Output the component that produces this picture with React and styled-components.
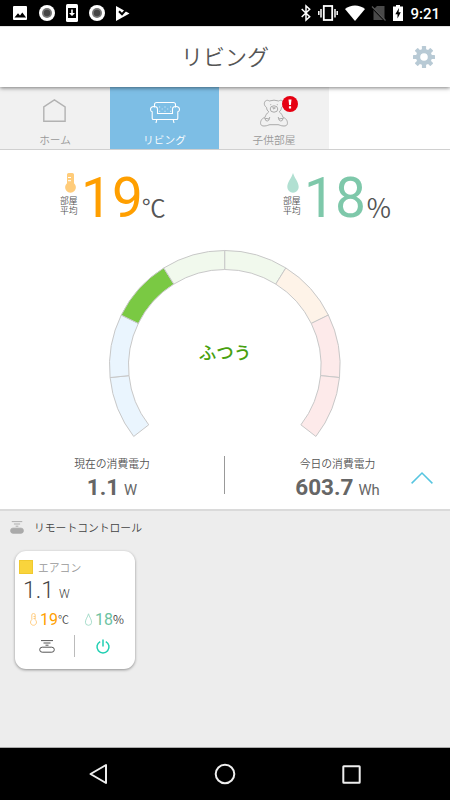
import React from "react"
import styled, { createGlobalStyle } from "styled-components"

const GlobalStyle = createGlobalStyle`
  * {
    box-sizing: border-box;
  }
  body {
    margin: 0;
    background: #fff;
    color: #555;
    font-family: Roboto, "Noto Sans CJK JP", sans-serif;
    font-weight: 350;
  }
  svg {
    display: block;
    flex: none;
    overflow: visible;
  }
`

const Screen = styled.div`
  width: 450px;
  height: 800px;
  display: flex;
  flex-direction: column;
  overflow: hidden;
`

const StatusBar = styled.div`
  height: 26px;
  flex: none;
  background: #000;
  display: flex;
  align-items: center;
  justify-content: space-between;
  padding: 0 10px 0 12px;
`

const StatusGroup = styled.div`
  display: flex;
  align-items: center;
  gap: ${props => props.$gap}px;
`

const Clock = styled.span`
  color: #fff;
  font-size: 15px;
  font-weight: 500;
  line-height: 26px;
  padding-top: 2px;
`

const Header = styled.header`
  position: relative;
  z-index: 1;
  height: 61px;
  flex: none;
  background: #fff;
  border-top: 1px solid #e2e2e2;
  box-shadow: 0 1px 4px rgba(0, 0, 0, 0.5);
  display: grid;
  grid-template-columns: 1fr auto 1fr;
  align-items: center;

  svg {
    justify-self: end;
    margin-right: 15px;
  }
`

const Heading = styled.h1`
  grid-column: 2;
  margin: 2px 0 0;
  color: #555;
  font-size: 22px;
  line-height: 32px;
  font-weight: 350;
`

const Tabs = styled.nav`
  height: 63px;
  flex: none;
  display: grid;
  grid-template-columns: 110px 109px 110px;
  border-bottom: 1px solid #d0d0d0;
`

const Tab = styled.div`
  display: flex;
  flex-direction: column;
  align-items: center;
  background: ${props => (props.$active ? "#7dbee5" : "#f1f1f1")};
  color: ${props => (props.$active ? "#fff" : "#999")};
  padding-top: 10px;
`

const TabIcon = styled.div`
  position: relative;
  height: 36px;
`

const TabLabel = styled.span`
  font-size: 10.7px;
  line-height: 16px;
`

const Alert = styled.div`
  position: absolute;
  top: -1px;
  left: 22px;
`

const Summary = styled.section`
  height: 361px;
  flex: none;
  border-bottom: 2px solid #dadada;
`

const Metrics = styled.div`
  height: 100px;
  display: grid;
  grid-template-columns: 223px 1fr;
  padding-left: 60px;
`

const Metric = styled.div`
  display: flex;
`

const MetricCaption = styled.div`
  width: 21px;
  padding-top: 23px;

  svg {
    margin: 0 0 3px ${props => props.$inset}px;
  }
`

const CaptionLine = styled.div`
  font-size: 8.8px;
  line-height: 10px;
`

const MetricValue = styled.span`
  color: ${props => props.$color};
  font-size: 55px;
  font-weight: 400;
  line-height: 64px;
  padding-top: 16px;
`

const MetricUnit = styled.span`
  font-family: "Noto Sans CJK JP", sans-serif;
  font-size: ${props => props.$size}px;
  line-height: 36px;
  padding-top: 39px;
  margin-left: ${props => props.$offset || 0}px;
`

const Gauge = styled.div`
  display: grid;
  width: 232px;
  margin: 0 auto 0 109px;
  height: 206px;

  > * {
    grid-area: 1 / 1;
  }
`

const GaugeLabel = styled.div`
  color: #48a00f;
  font-size: 17.5px;
  font-weight: 500;
  line-height: 28px;
  text-align: center;
  padding-top: 89px;
`

const Power = styled.div`
  display: grid;
  grid-template-columns: 224px 1px 225px;
`

const PowerItem = styled.div`
  text-align: center;
`

const PowerLabel = styled.div`
  font-size: 10.8px;
  line-height: 16px;
  padding-top: 1px;
`

const PowerValue = styled.div`
  display: flex;
  justify-content: center;
  align-items: baseline;
  gap: 5px;
  font-size: 22.5px;
  font-weight: 700;
  color: #666;
  line-height: 28px;
`

const PowerUnit = styled.span`
  font-size: 14.8px;
  font-weight: 400;
`

const Divider = styled.div`
  width: 1px;
  height: ${props => props.$height}px;
  background: ${props => props.$color};
`

const PowerToday = styled(PowerItem)`
  display: grid;

  > * {
    grid-area: 1 / 1;
  }

  svg {
    margin: 16px 17px 0 auto;
    justify-self: end;
  }
`

const Remote = styled.section`
  flex: 1;
  background: #ededed;
  border-bottom: 1px solid #aaa;
`

const RemoteTitle = styled.div`
  display: flex;
  align-items: center;
  gap: 10px;
  height: 32px;
  padding-left: 10px;
  color: #444;
  font-size: 10.8px;
`

const Card = styled.article`
  width: 120px;
  height: 118px;
  margin: 8px 0 0 15px;
  background: #fff;
  border-radius: 11px;
  box-shadow: 0 1px 3px rgba(0, 0, 0, 0.4);
  padding-top: 8px;
`

const CardTitle = styled.div`
  display: flex;
  align-items: center;
  gap: 5px;
  padding-left: 4px;
  height: 16px;
  color: #999;
  font-size: 10.8px;
`

const Swatch = styled.span`
  width: 14px;
  height: 14px;
  background: #f9d43c;
  border: 1px solid #f0c92e;
`

const CardPower = styled.div`
  display: flex;
  align-items: baseline;
  gap: 5px;
  padding-left: 8px;
  font-size: 23px;
  font-weight: 350;
  line-height: 31px;
  color: #444;

  small {
    font-size: 12px;
  }
`

const CardReadings = styled.div`
  display: grid;
  grid-template-columns: 55px 1fr;
  padding: 0 0 0 15px;
  margin-top: -1px;
`

const Reading = styled.div`
  display: flex;
  align-items: center;
  height: 20px;
  color: ${props => props.$color};
  font-size: 16px;
  font-weight: 400;

  svg {
    margin-right: 3px;
  }
`

const ReadingUnit = styled.span`
  font-family: "Noto Sans CJK JP", sans-serif;
  color: #444;
  font-size: ${props => props.$size}px;
  line-height: 16px;
  font-weight: 350;
  margin-bottom: 1px;
`

const CardActions = styled.div`
  display: grid;
  grid-template-columns: 59px 1px 1fr;
  align-items: center;
  height: 24px;
  margin-top: 5px;

  svg {
    margin: 0 auto;
  }
  svg:first-child {
    margin-right: 19px;
  }
  svg:last-child {
    margin-left: 21px;
  }
`

const NavBar = styled.div`
  height: 52px;
  flex: none;
  background: #000;
  display: flex;
  align-items: center;
  justify-content: space-between;
  padding: 0 89px;
`

const GAUGE_STEP = 31.95
const gaugeColors = [
  "#eaf5fe",
  "#eaf5fe",
  "#7ac943",
  "#f1f9ed",
  "#f1f9ed",
  "#fef3e8",
  "#fdeaea",
  "#fdeaea",
]

const polar = (radius, degrees) => {
  const a = (degrees * Math.PI) / 180
  return `${115.8 + radius * Math.sin(a)} ${115.8 - radius * Math.cos(a)}`
}

const segmentPath = index => {
  const from = (index - 4) * GAUGE_STEP
  const to = from + GAUGE_STEP
  return `M${polar(115.3, from)} A115.3 115.3 0 0 1 ${polar(115.3, to)}
    L${polar(96.3, to)} A96.3 96.3 0 0 0 ${polar(96.3, from)} Z`
}

const GaugeArc = () => (
  <svg width="232" height="204" fill="none" stroke="#c8c8c8">
    {gaugeColors.map((color, index) => (
      <path key={index} d={segmentPath(index)} fill={color} />
    ))}
  </svg>
)

const RecordIcon = () => (
  <svg width="16" height="16">
    <circle cx="8" cy="8" r="8" fill="#fff" />
    <circle cx="8" cy="8" r="5" fill="#777" />
    <circle cx="8" cy="8" r="3.2" fill="#444" />
  </svg>
)

const PictureIcon = () => (
  <svg width="16" height="14">
    <rect x="1" width="14" height="14" rx="1" fill="#fff" />
    <path d="M2.5 11.5 6 7.3l2 2.3 2.3-3 3.8 4.9z" fill="#000" />
  </svg>
)

const DownloadIcon = () => (
  <svg width="12" height="18">
    <rect width="12" height="18" rx="1.5" fill="#fff" />
    <path d="M2 4h8v10H2z" fill="#000" />
    <path d="M5.2 5.5h1.6V9H9l-3 3-3-3h2.2z" fill="#fff" />
  </svg>
)

const PlayCheckIcon = () => (
  <svg width="14" height="15">
    <path d="M0 0 13.5 7.5 0 15z" fill="#fff" />
    <path d="m3 5.2 3 3L12.4 1" fill="none" stroke="#000" strokeWidth="2" />
    <path d="m9.5 3.2 2.4 1.4" fill="none" stroke="#000" />
  </svg>
)

const BluetoothIcon = () => (
  <svg width="10" height="16" fill="none" stroke="#fff" strokeWidth="1.5">
    <path d="m.7 4 8 7.8L5 15V1l3.7 3.2L.7 12" />
  </svg>
)

const VibrateIcon = () => (
  <svg width="20" height="16">
    <rect
      x="5.8"
      y="1"
      width="8.4"
      height="14"
      fill="#000"
      stroke="#fff"
      strokeWidth="1.8"
    />
    <path
      d="M.8 6v4M3 4v8.5M17 4v8.5M19.2 6v4"
      stroke="#fff"
      strokeWidth="1.5"
    />
  </svg>
)

const WifiIcon = () => (
  <svg width="20" height="16">
    <path d="M0 4C5.5-.8 14.5-.8 20 4L10 16z" fill="#fff" />
  </svg>
)

const NoSimIcon = () => (
  <svg width="14" height="16">
    <path d="M5 1h7.5v14H1.5V4.5z" fill="#4a4a4a" />
    <path d="M0 2.5 13 16" stroke="#000" strokeWidth="1.6" />
    <path d="M0 1.5 13.5 15.5" stroke="#555" strokeWidth="1.2" />
  </svg>
)

const BatteryIcon = () => (
  <svg width="10" height="16">
    <path d="M3 0h4v1.5h3V16H0V1.5h3z" fill="#fff" />
    <path d="M6 3 2.3 9.2h2.2V13.5L7.8 7.3H5.6z" fill="#000" />
  </svg>
)

const GearIcon = () => (
  <svg width="22" height="22" fill="#b8cad5">
    {[0, 45, 90, 135].map(angle => (
      <rect
        key={angle}
        x="8.9"
        width="4.2"
        height="22"
        rx=".6"
        transform={`rotate(${angle} 11 11)`}
      />
    ))}
    <circle cx="11" cy="11" r="8" />
    <circle cx="11" cy="11" r="3.8" fill="#fff" />
  </svg>
)

const HomeIcon = () => (
  <svg width="23" height="26" fill="none" stroke="#b2b2b2" strokeWidth="1.4">
    <path d="M-.2 9.9 10.4 2.9 21.1 9.9v14.3H-.2z" />
  </svg>
)

const SofaIcon = () => (
  <svg width="30" height="26" fill="none" stroke="#fff" strokeWidth="1.1">
    <path d="M4.5 10.5V7.5q0-2 2.3-2h16.4q2.3 0 2.3 2v3" />
    <path d="M7.5 16.5v-4.2c0-4.2-7-3.2-7 .1 0 1.5.7 2 1.7 2.4v6.4q0 1.3 1.3 1.3h23q1.3 0 1.3-1.3v-6.4c1-.4 1.7-.9 1.7-2.4 0-3.3-7-4.3-7-.1v4.2z" />
    <path d="M6.7 22.8 6 26M23.3 22.8l.7 3.2" />
    <path
      d="M9 10h1.2M14.4 10h1.2M20 10h1.2M9 14.3h1.2M14.4 14.3h1.2M20 14.3h1.2M11.7 12h1M17.2 12h1"
      opacity=".7"
    />
  </svg>
)

const BearIcon = () => (
  <svg width="28" height="30" fill="none" stroke="#aaa" strokeWidth="1">
    <path d="M6.6 10.5C2 7.5 5.2 1.2 9.3 4q4.7-1.7 9.4 0C22.8 1.2 26 7.5 21.4 10.5c0 2-.9 3.3-2.2 4.3 1.9 1.4 3.2 3.4 3.8 5.4M6.6 10.5c0 2 .9 3.3 2.2 4.3-1.9 1.4-3.2 3.4-3.8 5.4" />
    <ellipse cx="14" cy="12" rx="3.8" ry="3.2" />
    <path d="M12.6 10.8h2.8L14 12.2zM4.5 20.5C1.5 21.5-.1 24.8.8 27.4c.5 1.2 1.8 1.6 3.2 1.6 3.5 0 4.5-1.3 6-1.3h8c1.5 0 2.5 1.3 6 1.3 1.4 0 2.7-.4 3.2-1.6.9-2.6-.7-5.9-3.7-6.9" />
    <path d="M4.5 20.5l1.3 3q1.5 1.2 3-.3l1-3.2M23.5 20.5l-1.3 3q-1.5 1.2-3-.3l-1-3.2M4.7 21.2l4.5.8M23.3 21.2l-4.5.8" />
    <circle cx="10.8" cy="7.7" r=".2" />
    <circle cx="17.2" cy="7.7" r=".2" />
  </svg>
)

const AlertIcon = () => (
  <svg width="16" height="16">
    <circle cx="8" cy="8" r="8" fill="#e60012" />
    <path d="M6.5 3.5h3L8.9 9H7.1zM6.9 10.3h2.2v2.1H6.9z" fill="#fff" />
  </svg>
)

const ThermometerIcon = () => (
  <svg width="12" height="20">
    <path
      d="M3 1.6Q3 0 4.6 0h3.8Q10 0 10 1.6v8.6a5.4 5.4 0 1 1-7 0z"
      fill="#ffcc7a"
    />
    <path d="M4 4.5h3M4 7.7h3" stroke="#fff" strokeWidth="1" />
  </svg>
)

const DropIcon = () => (
  <svg width="12" height="20">
    <path
      d="M6 0C7.5 5 11.7 9.3 11.7 14a5.7 5.8 0 0 1-11.4 0C.3 9.3 4.5 5 6 0z"
      fill="#b1e0d2"
    />
  </svg>
)

const SmallThermometerIcon = () => (
  <svg width="7" height="13" fill="none" stroke="#ffc878" strokeWidth=".9">
    <path d="M1.8 6.8V2Q1.8.5 3.5.5T5.2 2v4.8a3 3 0 1 1-3.4 0zM3.5 3.5h1.7M3.5 5.5h1.7" />
  </svg>
)

const SmallDropIcon = () => (
  <svg width="7" height="13" fill="none" stroke="#9fd9c6" strokeWidth=".9">
    <path d="M3.5.8C4.3 4 6.6 6.4 6.6 9.2a3.1 3.1 0 0 1-6.2 0C.4 6.4 2.7 4 3.5.8z" />
  </svg>
)

const ChevronIcon = () => (
  <svg width="22" height="12" fill="none" stroke="#56c5e0" strokeWidth="1.5">
    <path d="M.6 11.4 11 1l10.4 10.4" />
  </svg>
)

const RemoteIcon = ({ filled }) => (
  <svg
    width={filled ? 14 : 16}
    height="13"
    viewBox="0 0 16 13"
    preserveAspectRatio="none"
    fill="none"
    stroke={filled ? "#aaa" : "#555"}
  >
    <path d="M2 .6h12M4.5 3h7M6.5 5.2h3" />
    <rect
      x=".7"
      y="7.2"
      width="14.6"
      height="5"
      rx="2.5"
      fill={filled ? "#aaa" : "none"}
    />
  </svg>
)

const PowerIcon = () => (
  <svg width="14" height="15" fill="none" stroke="#20cfb2" strokeWidth="1.5">
    <path d="M4.2 2.6a6 6 0 1 0 5.6 0M7 .5v7" />
  </svg>
)

const NavIcons = () => (
  <>
    <svg width="18" height="20" fill="none" stroke="#eee" strokeWidth="2">
      <path d="M17 1v18L1.5 10z" strokeLinejoin="round" />
    </svg>
    <svg width="20" height="20" fill="none" stroke="#eee" strokeWidth="2">
      <circle cx="10" cy="10" r="9.3" />
    </svg>
    <svg width="19" height="19" fill="none" stroke="#eee" strokeWidth="2">
      <rect x="1.3" y="1.3" width="16.4" height="16.4" rx=".5" />
    </svg>
  </>
)

const App = () => {
  return (
    <Screen>
      <GlobalStyle />
      <StatusBar>
        <StatusGroup $gap={11}>
          <PictureIcon />
          <RecordIcon />
          <DownloadIcon />
          <RecordIcon />
          <PlayCheckIcon />
        </StatusGroup>
        <StatusGroup $gap={7}>
          <BluetoothIcon />
          <VibrateIcon />
          <WifiIcon />
          <NoSimIcon />
          <BatteryIcon />
          <Clock>9:21</Clock>
        </StatusGroup>
      </StatusBar>

      <Header>
        <Heading>リビング</Heading>
        <GearIcon />
      </Header>

      <Tabs>
        <Tab>
          <TabIcon>
            <HomeIcon />
          </TabIcon>
          <TabLabel>ホーム</TabLabel>
        </Tab>
        <Tab $active>
          <TabIcon>
            <SofaIcon />
          </TabIcon>
          <TabLabel>リビング</TabLabel>
        </Tab>
        <Tab>
          <TabIcon>
            <BearIcon />
            <Alert>
              <AlertIcon />
            </Alert>
          </TabIcon>
          <TabLabel>子供部屋</TabLabel>
        </Tab>
      </Tabs>

      <Summary>
        <Metrics>
          <Metric>
            <MetricCaption $inset={4}>
              <ThermometerIcon />
              <CaptionLine>部屋</CaptionLine>
              <CaptionLine>平均</CaptionLine>
            </MetricCaption>
            <MetricValue $color="#ff9f00">19</MetricValue>
            <MetricUnit $size={24} $offset={-1}>
              ℃
            </MetricUnit>
          </Metric>
          <Metric>
            <MetricCaption $inset={4}>
              <DropIcon />
              <CaptionLine>部屋</CaptionLine>
              <CaptionLine>平均</CaptionLine>
            </MetricCaption>
            <MetricValue $color="#7ec8aa">18</MetricValue>
            <MetricUnit $size={26.5} $offset={1}>
              %
            </MetricUnit>
          </Metric>
        </Metrics>

        <Gauge>
          <GaugeArc />
          <GaugeLabel>ふつう</GaugeLabel>
        </Gauge>

        <Power>
          <PowerItem>
            <PowerLabel>現在の消費電力</PowerLabel>
            <PowerValue>
              1.1 <PowerUnit>W</PowerUnit>
            </PowerValue>
          </PowerItem>
          <Divider $height={38} $color="#999" />
          <PowerToday>
            <div>
              <PowerLabel>今日の消費電力</PowerLabel>
              <PowerValue>
                603.7 <PowerUnit>Wh</PowerUnit>
              </PowerValue>
            </div>
            <ChevronIcon />
          </PowerToday>
        </Power>
      </Summary>

      <Remote>
        <RemoteTitle>
          <RemoteIcon filled />
          リモートコントロール
        </RemoteTitle>
        <Card>
          <CardTitle>
            <Swatch />
            エアコン
          </CardTitle>
          <CardPower>
            1.1 <small>W</small>
          </CardPower>
          <CardReadings>
            <Reading $color="#ff9f00">
              <SmallThermometerIcon />
              19<ReadingUnit $size={11}>℃</ReadingUnit>
            </Reading>
            <Reading $color="#6cc3a2">
              <SmallDropIcon />
              18<ReadingUnit $size={12}>%</ReadingUnit>
            </Reading>
          </CardReadings>
          <CardActions>
            <RemoteIcon />
            <Divider $height={22} $color="#bbb" />
            <PowerIcon />
          </CardActions>
        </Card>
      </Remote>

      <NavBar>
        <NavIcons />
      </NavBar>
    </Screen>
  )
}

export default App
